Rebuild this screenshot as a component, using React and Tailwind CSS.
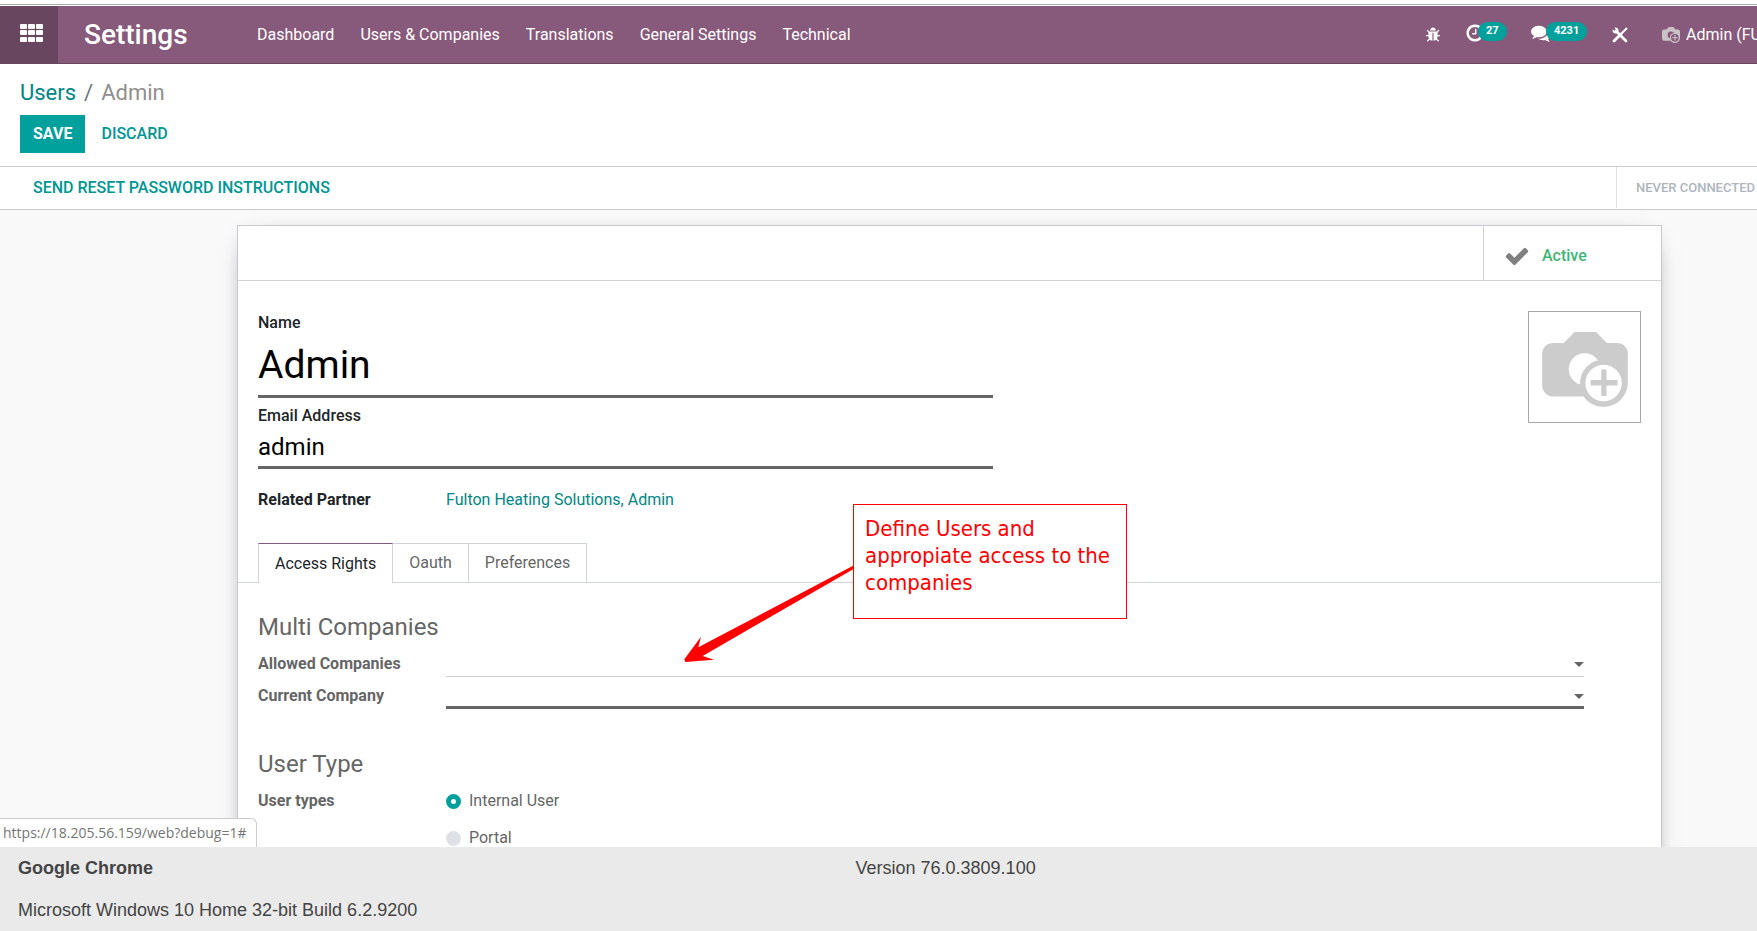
import React, { useState } from 'react';

const ICONS = {
  bug: 'M1696 960q0 26-19 45t-45 19h-224q0 171-67 290l208 209q19 19 19 45t-19 45q-18 19-45 19t-45-19l-198-197q-5 5-15 13t-42 28.5-65 36.5-82 29-97 13v-896h-128v896q-51 0-101.5-13.5t-87-33-66-39-43.5-32.5l-15-14-183 207q-20 21-48 21-24 0-43-16-19-18-20.5-44.5t15.5-46.5l202-227q-58-114-58-274h-224q-26 0-45-19t-19-45 19-45 45-19h224v-294l-173-173q-19-19-19-45t19-45 45-19 45 19l173 173h844l173-173q19-19 45-19t45 19 19 45-19 45l-173 173v294h224q26 0 45 19t19 45zm-480-576h-640q0-133 93.5-226.5t226.5-93.5 226.5 93.5 93.5 226.5z',
  clock: 'M1024 544v448q0 14-9 23t-23 9h-320q-14 0-23-9t-9-23v-64q0-14 9-23t23-9h224v-352q0-14 9-23t23-9h64q14 0 23 9t9 23zm416 352q0-148-73-273t-198-198-273-73-273 73-198 198-73 273 73 273 198 198 273 73 273-73 198-198 73-273zm224 0q0 209-103 385.5t-279.5 279.5-385.5 103-385.5-103-279.5-279.5-103-385.5 103-385.5 279.5-279.5 385.5-103 385.5 103 279.5 279.5 103 385.5z',
  comments: 'M1408 768q0 139-94 257t-256.5 186.5-353.5 68.5q-86 0-176-16-124 88-278 128-36 9-86 16h-3q-11 0-20.5-8t-11.5-21q-1-3-1-6.5t.5-6.5 2-6l2.5-5 3.5-5.5 4-5 4.5-5 4-4.5q5-6 23-25t26-29.5 22.5-29 25-38.5 20.5-44q-124-72-195-177t-71-224q0-139 94-257t256.5-186.5 353.5-68.5 353.5 68.5 256.5 186.5 94 257zm384 256q0 120-71 224.5t-195 176.5q10 24 20.5 44t25 38.5 22.5 29 26 29.5 23 25q1 1 4 4.5t4.5 5 4 5 3.5 5.5l2.5 5 2 6 .5 6.5-1 6.5q-3 14-13 22t-22 7q-50-7-86-16-154-40-278-128-90 16-176 16-271 0-472-132 58 4 88 4 161 0 309-45t264-129q125-92 192-212t67-254q0-77-23-152 129 71 204 178t75 230z',
  check: 'M1671 566q0 40-28 68l-724 724-136 136q-28 28-68 28t-68-28l-136-136-362-362q-28-28-28-68t28-68l136-136q28-28 68-28t68 28l294 295 656-657q28-28 68-28t68 28l136 136q28 28 28 68z',
};

const Icon = ({ name, className }) => (
  <svg viewBox="0 0 1792 1792" fill="currentColor" aria-hidden="true" className={className}>
    <path d={ICONS[name]} />
  </svg>
);

const AppsIcon = () => (
  <svg viewBox="0 0 24 18" fill="currentColor" aria-hidden="true" className="h-[18px] w-6">
    {[0, 6, 13].map((y) =>
      [0, 8, 16].map((x) => <rect key={`${x}-${y}`} x={x} y={y} width="7" height="5" rx="1" />)
    )}
  </svg>
);

const ToolsIcon = () => (
  <svg viewBox="0 0 16 16" aria-hidden="true" className="h-4 w-4">
    <path d="M4 4 L14 14" stroke="currentColor" strokeWidth="2.6" strokeLinecap="round" />
    <path d="M2 14 L9 7" stroke="currentColor" strokeWidth="2.8" strokeLinecap="round" />
    <path d="M9 7 L14.5 1.5" stroke="currentColor" strokeWidth="2" strokeLinecap="round" />
    <path d="M2.6 0.8 A3 3 0 1 1 0.8 2.6 L3 4 L4 3 Z" fill="currentColor" />
  </svg>
);

const CameraIcon = ({ className, hole }) => (
  <svg viewBox="0 0 258 226" aria-hidden="true" className={className}>
    <path
      d="M98 0h64l33 33h31a32 32 0 0 1 32 32v88a73 73 0 0 1 -133 41H32a32 32 0 0 1 -32 -32V65a32 32 0 0 1 32 -32h33z"
      fill="currentColor"
    />
    <circle cx="128" cy="112" r="48" className={hole} />
    <circle cx="185" cy="154" r="71" fill="currentColor" />
    <circle cx="185" cy="154" r="55" className={hole} />
    <path d="M178 113h16v32h33v16h-33v32h-16v-32h-32v-16h32z" fill="currentColor" />
  </svg>
);

const menus = ['Dashboard', 'Users & Companies', 'Translations', 'General Settings', 'Technical'];
const tabs = ['Access Rights', 'Oauth', 'Preferences'];
const userTypes = ['Internal User', 'Portal'];

const Navbar = () => (
  <header className="flex h-[58px] shrink-0 items-stretch overflow-hidden border-b border-[#68465f] bg-[#875a7b] text-white">
    <button type="button" aria-label="Applications" className="flex w-[58px] shrink-0 items-center justify-center bg-[#68465f] pb-1 pl-[6px]">
      <AppsIcon />
    </button>
    <a href="#settings" className="flex w-[186px] shrink-0 items-center pl-[26px] text-[28px] font-medium">Settings</a>
    <nav className="flex items-center">
      {menus.map((menu) => (
        <a key={menu} href="#menu" className="px-[13px] text-base whitespace-nowrap">{menu}</a>
      ))}
    </nav>
    <div className="ml-auto flex shrink-0 items-center">
      <button type="button" aria-label="Open developer tools" className="w-10">
        <Icon name="bug" className="h-4 w-4" />
      </button>
      <button type="button" aria-label="Activities" className="relative h-6 w-[66px] pb-1">
        <Icon name="clock" className="h-5 w-5" />
        <span className="absolute -top-px left-[13px] h-[19px] rounded-full bg-[#00a09d] px-2 text-[11px] leading-[18px] font-bold">27</span>
      </button>
      <button type="button" aria-label="Conversations" className="relative h-6 w-[81px] pb-1">
        <Icon name="comments" className="h-5 w-5" />
        <span className="absolute -top-px left-[15px] h-[19px] rounded-full bg-[#00a09d] px-2 text-[11px] leading-[18px] font-bold">4231</span>
      </button>
      <button type="button" aria-label="Tools" className="w-[50px]">
        <ToolsIcon />
      </button>
      <button type="button" className="flex w-[95px] items-center gap-[6px] overflow-hidden text-base whitespace-nowrap">
        <CameraIcon className="h-4 w-[18px] shrink-0 text-[#c9c2c7]" hole="fill-[#875a7b]" />
        Admin (FU
      </button>
    </div>
  </header>
);

const ControlPanel = () => (
  <div className="shrink-0 border-b border-[#cccccc] px-5 pt-[13px] pb-[13px]">
    <ol className="flex gap-2 text-[22px] leading-[32px] text-[#6c757d]">
      <li><a href="#users" className="text-[#008784]">Users</a></li>
      <li aria-hidden="true">/</li>
      <li className="text-[#8f8f8f]">Admin</li>
    </ol>
    <div className="mt-[6px] flex">
      <button type="button" className="h-[38px] bg-[#00a09d] px-[13px] text-base font-bold text-white">SAVE</button>
      <button type="button" className="h-[38px] px-4 text-base font-medium text-[#009693]">DISCARD</button>
    </div>
  </div>
);

const StatusBar = () => (
  <div className="flex h-[43px] shrink-0 justify-between border-b border-[#cccccc]">
    <button type="button" className="pl-[33px] text-base font-medium text-[#009693]">SEND RESET PASSWORD INSTRUCTIONS</button>
    <div className="mb-px flex w-[141px] items-center overflow-hidden border-l border-[#dee2e6] pl-[19px] text-[13px] font-medium whitespace-nowrap text-[#adb5bd]">
      NEVER CONNECTED
    </div>
  </div>
);

const CompanySelect = ({ id, label, required }) => (
  <div className="flex h-8">
    <label htmlFor={id} className="w-[188px] shrink-0 pt-[7px] font-bold text-[#666666]">{label}</label>
    <div className="relative flex-1">
      <select
        id={id}
        className={`h-8 w-full appearance-none bg-transparent outline-none ${
          required ? 'border-b-3 border-[#666666]' : 'border-b border-[#cccccc]'
        }`}
      />
      <svg viewBox="0 0 10 5" aria-hidden="true" className="pointer-events-none absolute top-[17px] right-0 h-[5px] w-[10px] fill-[#666666]">
        <path d="M0 0h10l-5 5z" />
      </svg>
    </div>
  </div>
);

const Callout = () => (
  <>
    <svg viewBox="42 225 510 291" aria-hidden="true" className="absolute top-[339px] left-[446px] h-[97px] w-[170px] fill-[#ff0000]">
      <path d="M552 226 L85 472 L93 440 L43 508 L46 516 L132 509 L98 498 L552 236 Z" />
    </svg>
    <p className="absolute top-[278px] left-[615px] h-[115px] w-[274px] border border-[#ff0000] bg-white pt-[10px] pl-[11px] font-['DejaVu_Sans_Condensed','DejaVu_Sans',sans-serif] text-[22px] leading-[27px] text-[#ff0000]">
      Define Users and<br />appropiate access to the<br />companies
    </p>
  </>
);

const UserForm = () => {
  const [tab, setTab] = useState('Access Rights');
  const [userType, setUserType] = useState('Internal User');

  return (
    <form className="relative mt-[15px] mr-[95px] ml-[237px] min-h-[900px] border border-[#c8c8d3] bg-white text-base leading-6 text-[#666666] shadow-[0_6px_25px_-16px_black]">
      <div className="flex h-[55px] justify-end border-b border-[#ced4da]">
        <button type="button" className="flex w-[178px] items-center gap-3 border-l border-[#ced4da] pt-[5px] pl-5">
          <Icon name="check" className="h-[26px] w-[26px] text-[#808080]" />
          <span className="font-medium text-[#3eb573]">Active</span>
        </button>
      </div>

      <div className="flex justify-between px-5 pt-[30px] text-[#212529]">
        <div className="w-[735px]">
          <label htmlFor="name" className="block font-medium">Name</label>
          <input id="name" defaultValue="Admin" className="block h-[63px] w-full border-b-3 border-[#666666] text-[39px] text-black outline-none" />
          <label htmlFor="email" className="mt-[6px] block font-medium">Email Address</label>
          <input id="email" defaultValue="admin" className="block h-[41px] w-full border-b-3 border-[#666666] text-2xl text-black outline-none" />
          <div className="mt-[19px] flex">
            <span className="w-[188px] font-bold">Related Partner</span>
            <a href="#partner" className="text-[#008784]">Fulton Heating Solutions, Admin</a>
          </div>
        </div>
        <button type="button" aria-label="Upload photo" className="flex h-28 w-[113px] items-center justify-center border border-[#a8a8a8] pt-1">
          <CameraIcon className="h-[75px] w-[86px] text-[#cccccc]" hole="fill-white" />
        </button>
      </div>

      <div role="tablist" className="mt-[31px] flex border-b border-[#ced4da] pl-5">
        {tabs.map((name, i) => (
          <button
            key={name}
            type="button"
            role="tab"
            aria-selected={tab === name}
            onClick={() => setTab(name)}
            className={`border-t border-r px-4 py-[7px] ${i === 0 ? 'border-l' : ''} ${
              tab === name
                ? '-mb-px border-[#ced4da] border-t-[#875a7b] bg-white text-[#212529]'
                : 'border-[#ced4da]'
            }`}
          >
            {name}
          </button>
        ))}
      </div>

      <div className="pr-[77px] pl-5">
        <h2 className="mt-7 mb-[2px] text-2xl">Multi Companies</h2>
        <CompanySelect id="allowed" label="Allowed Companies" />
        <CompanySelect id="current" label="Current Company" required />

        <h2 className="mt-[39px] mb-[9px] text-2xl">User Type</h2>
        <fieldset className="flex">
          <legend className="float-left w-[188px] font-bold">User types</legend>
          <div className="flex flex-col gap-[13px]">
            {userTypes.map((type) => (
              <label key={type} className="flex items-center gap-2">
                <input
                  type="radio"
                  name="user-type"
                  checked={userType === type}
                  onChange={() => setUserType(type)}
                  className="h-[15px] w-[15px] appearance-none rounded-full bg-[#dee2e6] checked:border-5 checked:border-[#00a09d] checked:bg-white"
                />
                {type}
              </label>
            ))}
          </div>
        </fieldset>
      </div>

      <Callout />
    </form>
  );
};

const App = () => (
  <div className="flex h-screen flex-col overflow-hidden bg-white font-[Roboto,sans-serif]">
    <div className="mt-1 mb-px h-px shrink-0 bg-[#aaaaaa]" />
    <Navbar />
    <ControlPanel />
    <StatusBar />
    <main className="relative min-h-0 flex-1 overflow-hidden bg-[#f9f9f9]">
      <UserForm />
      <div className="absolute bottom-0 left-0 h-[29px] w-[257px] rounded-tr-md border-t border-r border-[#cccccc] bg-white px-[3px] font-['Open_Sans',sans-serif] text-sm leading-7 text-[#757575]">
        https://18.205.56.159/web?debug=1#
      </div>
    </main>
    <footer className="grid h-[84px] shrink-0 grid-cols-2 bg-[#eaeaea] pr-16 pl-[18px] font-['Liberation_Sans',sans-serif] text-lg leading-[42px] text-[#444444]">
      <strong>Google Chrome</strong>
      <span>Version 76.0.3809.100</span>
      <span>Microsoft Windows 10 Home 32-bit Build 6.2.9200</span>
    </footer>
  </div>
);

export default App;
